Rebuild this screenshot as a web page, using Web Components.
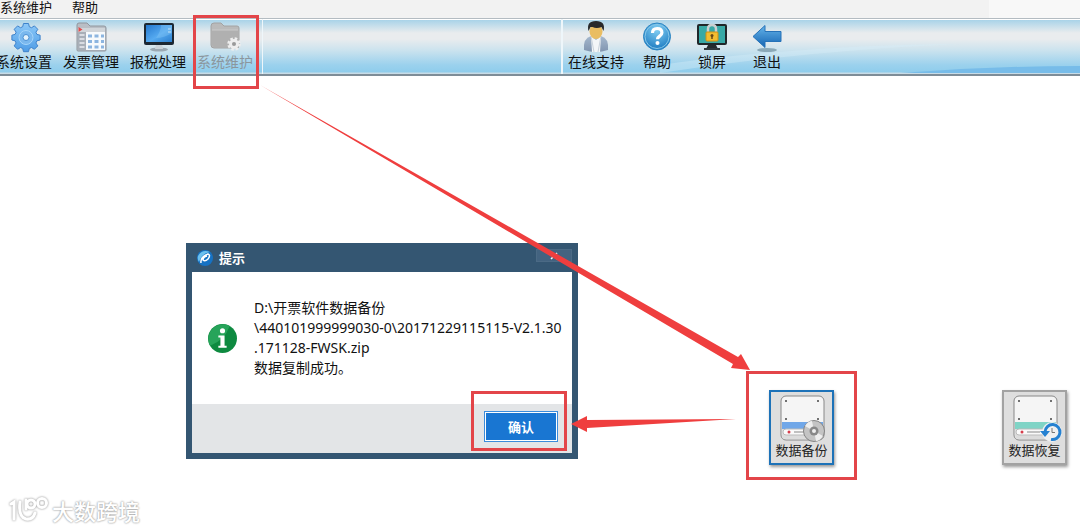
<!DOCTYPE html>
<html lang="zh-CN">
<head>
<meta charset="utf-8">
<title>开票软件</title>
<style>
  body {
    margin: 0;
    min-height: 100vh;
    background: #fff;
    color: #111;
    font-family: "Noto Sans", "Noto Sans CJK SC", sans-serif;
    font-size: 14px;
  }
</style>
</head>
<body>
<billing-app></billing-app>

<script>
const ICONS = {
  gear: `
    <defs><linearGradient id="g" x2="0" y2="1"><stop stop-color="#8cc8f8"/><stop offset="1" stop-color="#4f9de6"/></linearGradient></defs>
    <g transform="translate(2 0)">
      <path d="M13.500 2.500h5l.8 3.200 2.200 1 2.900-1.800 3.400 3.400-1.900 2.900 1 2.200 3.200.8v4.800l-3.200.8-1 2.200 1.900 2.900-3.400 3.400-2.900-1.800-2.200 1-.8 3.200h-5l-.8-3.200-2.200-1-2.900 1.800-3.400-3.400 1.900-2.900-1-2.200-3.200-.8v-4.800l3.200-.8 1-2.200-1.900-2.900 3.400-3.400 2.900 1.800 2.200-1z" fill="url(#g)" stroke="#3d82cb"/>
      <circle cx="16" cy="16.500" r="7" fill="#7ab8ee" stroke="#a5d5fa"/>
      <circle cx="16" cy="16.500" r="3" fill="#e4f2fc" stroke="#4b8fd2"/>
    </g>`,
  invoice: `
    <path d="M2 4q0-2 2-2h8l3 3h14q2 0 2 2v22q0 1-1 1H3q-1 0-1-1z" fill="#b9bec5" stroke="#8f969e"/>
    <path d="M3 7h27v4H3z" fill="#d1d5d9"/>
    <path d="M3 11h8v18H3z" fill="#a8afb8"/><path d="M11 11h19v18H11z" fill="#f7fafc"/>
    <path d="m3.500 6 4 2.500-4 2.500z" fill="#e34a4a"/>
    <path d="M4.500 14h5m-5 4h5m-5 4h5m-5 4h5" stroke="#e9ecef" stroke-width="1.500"/>
    <path d="M13 15h4m2.500 0h4m2.500 0h3M13 20.500h4m2.500 0h4m2.500 0h3M13 26h4m2.500 0h4m2.500 0h3" stroke="#8cb5e0" stroke-width="3"/>`,
  monitor: `
    <defs><linearGradient id="g" x2="1" y2="1"><stop stop-color="#2478cf"/><stop offset=".55" stop-color="#56aaf0"/><stop offset="1" stop-color="#2c7fce"/></linearGradient></defs>
    <ellipse cx="17" cy="28.500" rx="9" ry="2" fill="#9ba8b2"/><path d="M14 23h6l1 5h-8z" fill="#cbd3da"/>
    <rect x="2" y="2" width="30" height="22" rx="2" fill="#1d2833"/>
    <path d="M4 4h26v17H4z" fill="url(#g)"/><path d="M19 4h11v8q-8 5-16 5 5-7 5-13z" fill="#8bcaf5" opacity=".35"/>
    <path d="M26 8h3m-3 3h3" stroke="#c4e4f8"/>`,
  folder: `
    <path d="M2 5q0-3 3-3h7l3 3h13q2 0 2 2v18q0 2-2 2H5q-3 0-3-3z" fill="#bababa" stroke="#a2a2a2"/>
    <path d="M3 9h26v15q0 2-2 2H5q-2 0-2-2z" fill="#b0b0b0"/><path d="M3 9h26" stroke="#cacaca"/>
    <g fill="none" stroke="#eee"><circle cx="25" cy="23" r="5.500" stroke-width="2.500" stroke-dasharray="2.500 1.820"/><circle cx="25" cy="23" r="3.500" stroke-width="3"/></g>
    <circle cx="25" cy="23" r="1.800" fill="#999"/>`,
  person: `
    <defs><linearGradient id="g" x2="0" y2="1"><stop stop-color="#a5b8cd"/><stop offset="1" stop-color="#8095b0"/></linearGradient></defs>
    <path d="M4 29q-1-12 7-14h10q8 2 7 14-12 4-24 0z" fill="url(#g)"/>
    <path d="m11 15 5 4 5-4-1 16h-8z" fill="#f3f6f8"/><path d="m11 15 3 16m7-16-3 16" stroke="#c8d2dc"/>
    <ellipse cx="16" cy="10.500" rx="6.500" ry="7.500" fill="#e9bd62"/>
    <path d="M8.500 10Q6 0 16 0q10 0 7.500 10l-2-4q-5 2-9 0l-2 0z" fill="#28292b"/>`,
  help: `
    <defs><radialGradient id="g" cx=".5" cy=".25" r=".8"><stop stop-color="#83cff3"/><stop offset="1" stop-color="#1474bd"/></radialGradient></defs>
    <circle cx="16" cy="15.500" r="13.500" fill="url(#g)" stroke="#2a85c3"/><circle cx="16" cy="15.500" r="12" fill="none" stroke="#88c8e9"/>
    <path d="M11.500 12q0-4.500 4.700-4.500t4.700 4.200c0 3.500-4.400 3.300-4.400 6.500" fill="none" stroke="#fff" stroke-width="3.200"/><circle cx="16.500" cy="22" r="2" fill="#fff"/>`,
  lock: `
    <path d="M12 24h8l2 4H10z" fill="#242b2e"/><path d="M8 28h16" stroke="#30383d" stroke-width="2"/>
    <rect x="1" y="3" width="30" height="21" rx="2" fill="#20272a"/><path d="M3 5h26v17H3z" fill="#38a9a6"/>
    <path d="M12 12V8q0-4 4-4t4 4v4" fill="none" stroke="#c9d0d1" stroke-width="2.500"/>
    <rect x="10" y="11" width="12" height="9" rx="1" fill="#f3bd31" stroke="#d09015"/>
    <circle cx="16" cy="14.500" r="1.500" fill="#684817"/><path d="M16 15v3" stroke="#684817" stroke-width="1.500"/>`,
  exit: `
    <defs><linearGradient id="g" x2="0" y2="1"><stop stop-color="#65b4ea"/><stop offset="1" stop-color="#1463b1"/></linearGradient></defs>
    <ellipse cx="16" cy="29" rx="10" ry="2" fill="#8ba9b8"/>
    <path d="m2 15.500 12-11v6h16v10H14v6z" fill="url(#g)" stroke="#2672b8"/>`,
};

const DRIVE = `
  <rect x="3" y="1" width="43" height="44" rx="5" fill="#f5f5f5" stroke="#888"/>
  <path d="M4 27h41v7H4z" fill="var(--band)"/>
  <path d="M4 34h41v6q0 4-4 4H8q-4 0-4-4z" fill="#dcdcdc"/>
  <rect x="5" y="34" width="38" height="6" rx="3" fill="#fafafa" stroke="#bbb"/>
  <g fill="#444"><circle cx="8" cy="6" r="1"/><circle cx="40" cy="6" r="1"/><circle cx="8" cy="24" r="1"/><circle cx="40" cy="24" r="1"/></g>
  <circle cx="11" cy="37" r="1.500" fill="#d63d4b"/><path d="M16 37h13" stroke="#888"/>`;

const BADGES = {
  backup: `
    <circle cx="36" cy="36" r="10.500" fill="#c4c4c4" stroke="#858585"/>
    <path d="m36 36-9-5q3-5 7-5zm0 0 9 5q-3 5-7 5z" fill="#eee"/>
    <circle cx="36" cy="36" r="4.500" fill="#888"/><circle cx="36" cy="36" r="2" fill="#eee"/>`,
  restore: `
    <circle cx="41" cy="37" r="10" fill="#f0f0f0"/>
    <path d="M34 37a7.500 7.500 0 1 1 6 7.400" fill="none" stroke="#2581d1" stroke-width="3"/>
    <path d="M29 36h10l-5 6z" fill="#2581d1"/><path d="M41 33v4.500h3" fill="none" stroke="#777"/>`,
};

class ToolItem extends HTMLElement {
  constructor() {
    super();
    this.attachShadow({ mode: 'open' });
  }

  connectedCallback() {
    this.shadowRoot.innerHTML = `
      <style>
        :host { display: block; flex: none; }
        button {
          display: flex;
          flex-direction: column;
          align-items: center;
          min-width: 54px;
          padding: 2px 5px 0;
          border: 0;
          background: none;
          color: #111;
          font: inherit;
          line-height: 18px;
          white-space: nowrap;
        }
        button:disabled { color: #8b969d; }
        svg { width: 32px; height: 32px; overflow: visible; }
      </style>
      <button type="button" ${this.hasAttribute('disabled') ? 'disabled' : ''}>
        <svg viewBox="0 0 32 32" aria-hidden="true">${ICONS[this.getAttribute('icon')]}</svg>
        <slot></slot>
      </button>
    `;
  }
}

class DesktopShortcut extends HTMLElement {
  constructor() {
    super();
    this.attachShadow({ mode: 'open' });
  }

  connectedCallback() {
    this.shadowRoot.innerHTML = `
      <style>
        :host { display: block; --band: #7fd4c6; --edge: #a2a2a2; }
        :host([selected]) { --band: #70a7e8; --edge: #1d72b8; }
        button {
          display: flex;
          flex-direction: column;
          align-items: center;
          width: 65px;
          height: 75px;
          padding: 3px 0 0;
          border: 2px solid var(--edge);
          background: #dedede;
          box-shadow: 1px 2px 3px #999;
          color: #222;
          font: inherit;
          font-size: 13px;
          line-height: 18px;
          white-space: nowrap;
        }
        svg { width: 48px; height: 46px; overflow: visible; }
      </style>
      <button type="button">
        <svg viewBox="0 0 48 46" aria-hidden="true">${DRIVE}${BADGES[this.getAttribute('icon')]}</svg>
        <slot></slot>
      </button>
    `;
  }
}

class MessageDialog extends HTMLElement {
  constructor() {
    super();
    this.attachShadow({ mode: 'open' });
  }

  connectedCallback() {
    this.shadowRoot.innerHTML = `
      <style>
        :host {
          display: block;
          box-sizing: border-box;
          width: 392px;
          border: 6px solid #345672;
          border-top: 0;
          background: #fff;
        }
        header {
          display: flex;
          align-items: center;
          gap: 6px;
          height: 29px;
          padding-left: 5px;
          background: #345672;
          color: #fff;
        }
        h2 { flex: 1; margin: 0; font-size: 13px; }
        .logo { width: 16px; height: 16px; }
        .close {
          align-self: flex-start;
          display: grid;
          place-items: center;
          width: 36px;
          height: 13px;
          margin-top: 6px;
          padding: 0;
          border: 1px solid #4b6a85;
          background: #436380;
        }
        .close svg { width: 8px; height: 8px; }
        .message {
          display: flex;
          align-items: center;
          gap: 16px;
          height: 132px;
          padding-left: 15px;
        }
        .message svg { flex: none; width: 31px; height: 31px; }
        p { margin: 0; line-height: 20px; white-space: nowrap; }
        footer {
          display: flex;
          justify-content: flex-end;
          padding: 7px 14px 11px;
          background: #e3e5e7;
        }
        .ok {
          width: 74px;
          height: 31px;
          padding: 0;
          border: 1px solid #3c8cdb;
          background: #1976d2;
          box-shadow: inset 0 0 0 1px #fff;
          color: #fff;
          font: inherit;
          font-size: 13px;
          font-weight: bold;
        }
      </style>
      <header>
        <svg class="logo" viewBox="0 0 16 16" aria-hidden="true">
          <circle cx="8" cy="8" r="8" fill="#1672c4"/>
          <path d="M1 6q4-7 12-4Q5 3 2 12 0 9 1 6z" fill="#6cc0ee"/>
          <path d="M4 13q-1-6 7-9 3 1 0 5-3 3-5 1 0-3 4-4" fill="none" stroke="#fff" stroke-width="1.500"/>
        </svg>
        <h2><slot name="title"></slot></h2>
        <button class="close" type="button" aria-label="关闭">
          <svg viewBox="0 0 8 8"><path d="m1 1 6 6m0-6L1 7" stroke="#fff" stroke-width="1.500"/></svg>
        </button>
      </header>
      <div class="message">
        <svg viewBox="0 0 30 30" aria-hidden="true">
          <circle cx="15" cy="15" r="14" fill="#0e8a40"/>
          <path d="M3 22A14 14 0 0 1 22 3Q17 17 3 22z" fill="#27a45a"/>
          <circle cx="15" cy="7.500" r="2.500" fill="#fff"/>
          <path d="M11 12h6v10h2v2h-8v-2h2v-8h-2z" fill="#fff"/>
        </svg>
        <p><slot></slot></p>
      </div>
      <footer><button class="ok" type="button"><slot name="action"></slot></button></footer>
    `;
  }
}

class MarkupLayer extends HTMLElement {
  constructor() {
    super();
    this.attachShadow({ mode: 'open' });
    this.shadowRoot.innerHTML = `
      <style>
        :host { position: absolute; inset: 0; overflow: hidden; pointer-events: none; }
        svg { display: block; width: 1080px; height: 530px; }
      </style>
      <svg viewBox="0 0 1080 530" aria-hidden="true">
        <g fill="none" stroke="#e34549" stroke-width="3">
          <path d="M194.500 16.500h63v71h-63z"/>
          <path d="M747.500 372.500h108v106h-108z"/>
          <path d="M472.500 392.500h93v57h-93z"/>
        </g>
        <g fill="#ef3e3e">
          <path d="M260 85 738 357l3-3 9 16-19-2 2-4z"/>
          <path d="m736 419-149 9v4l-16-8 16-8v4z"/>
        </g>
      </svg>
    `;
  }
}

class SiteWatermark extends HTMLElement {
  constructor() {
    super();
    this.attachShadow({ mode: 'open' });
    this.shadowRoot.innerHTML = `
      <style>
        :host {
          position: absolute;
          left: 8px;
          bottom: 3px;
          display: flex;
          align-items: center;
          gap: 4px;
          color: #fff;
          font-size: 22px;
          font-weight: 500;
          line-height: 32px;
          text-shadow: 0 0 2px #999, 0 0 2px #bbb;
        }
        svg { width: 40px; height: 30px; filter: drop-shadow(0 0 1px #888); }
      </style>
      <svg viewBox="0 0 40 30" aria-hidden="true">
        <g fill="none" stroke="#fff" stroke-width="3" stroke-linecap="round">
          <path d="m3 8 3-2v17M12 6q-2 15 6 17 7 1 9-6"/>
          <path d="M18 4v9"/><circle cx="23" cy="8" r="4"/><circle cx="34" cy="7" r="4.500"/>
        </g>
      </svg>
      <slot></slot>
    `;
  }
}

class BillingApp extends HTMLElement {
  constructor() {
    super();
    this.attachShadow({ mode: 'open' });
    this.shadowRoot.innerHTML = `
      <style>
        :host {
          display: block;
          position: relative;
          min-height: 100vh;
          overflow: hidden;
        }
        .menu {
          display: flex;
          align-items: flex-start;
          gap: 20px;
          height: 18px;
          background: linear-gradient(90deg, #f2f2f2 989px, #f8f8f8 989px);
          font-size: 13px;
        }
        .menu button {
          padding: 0;
          border: 0;
          background: none;
          color: #111;
          font: inherit;
          line-height: 14px;
        }
        .toolbar {
          position: relative;
          display: flex;
          box-sizing: border-box;
          height: 58px;
          border-top: 1px solid #b4bcc2;
          border-bottom: 2px solid #7e8d98;
          background: linear-gradient(#fff 1px, #a9d3e8 1px, #e9ecee 14px, #e9ecee 20px, #cce3ee 31px, #9bd1ed 46px, #8fcdec 53px, #c8dce7 54px);
        }
        .wave {
          position: absolute;
          right: 0;
          bottom: 1px;
          width: 420px;
          height: 52px;
        }
        .group {
          position: relative;
          display: flex;
          gap: 1px;
        }
        .main { margin-left: -9px; padding-right: 4px; border-right: 1px solid #eef6fa; }
        .side { margin-left: 298px; border-left: 2px solid #eef6fa; }
        .workspace {
          display: flex;
          align-items: flex-start;
          padding: 167px 14px 0 186px;
        }
        .workspace message-dialog { flex: none; }
        .shortcuts {
          display: flex;
          gap: 168px;
          margin: 147px 0 0 191px;
        }
      </style>
      <nav class="menu">
        <button type="button">系统维护</button>
        <button type="button">帮助</button>
      </nav>
      <div class="toolbar" role="toolbar">
        <svg class="wave" viewBox="0 0 420 52" preserveAspectRatio="none" aria-hidden="true">
          <path d="M0 44Q140 24 300 23 140 30 0 52z" fill="#d6edf7" opacity=".4"/>
          <path d="M240 52q90-7 180-7v7z" fill="#77bce9"/>
        </svg>
        <div class="group main">
          <tool-item icon="gear">系统设置</tool-item>
          <tool-item icon="invoice">发票管理</tool-item>
          <tool-item icon="monitor">报税处理</tool-item>
          <tool-item icon="folder" disabled>系统维护</tool-item>
        </div>
        <div class="group side">
          <tool-item icon="person">在线支持</tool-item>
          <tool-item icon="help">帮助</tool-item>
          <tool-item icon="lock">锁屏</tool-item>
          <tool-item icon="exit">退出</tool-item>
        </div>
      </div>
      <main class="workspace">
        <message-dialog role="dialog">
          <span slot="title">提示</span>
          D:\\开票软件数据备份<br>\\440101999999030-0\\20171229115115-V2.1.30<br>.171128-FWSK.zip<br>数据复制成功。
          <span slot="action">确认</span>
        </message-dialog>
        <div class="shortcuts">
          <desktop-shortcut icon="backup" selected>数据备份</desktop-shortcut>
          <desktop-shortcut icon="restore">数据恢复</desktop-shortcut>
        </div>
      </main>
      <markup-layer></markup-layer>
      <site-watermark>大数跨境</site-watermark>
    `;
  }
}

customElements.define('tool-item', ToolItem);
customElements.define('desktop-shortcut', DesktopShortcut);
customElements.define('message-dialog', MessageDialog);
customElements.define('markup-layer', MarkupLayer);
customElements.define('site-watermark', SiteWatermark);
customElements.define('billing-app', BillingApp);
</script>
</body>
</html>
